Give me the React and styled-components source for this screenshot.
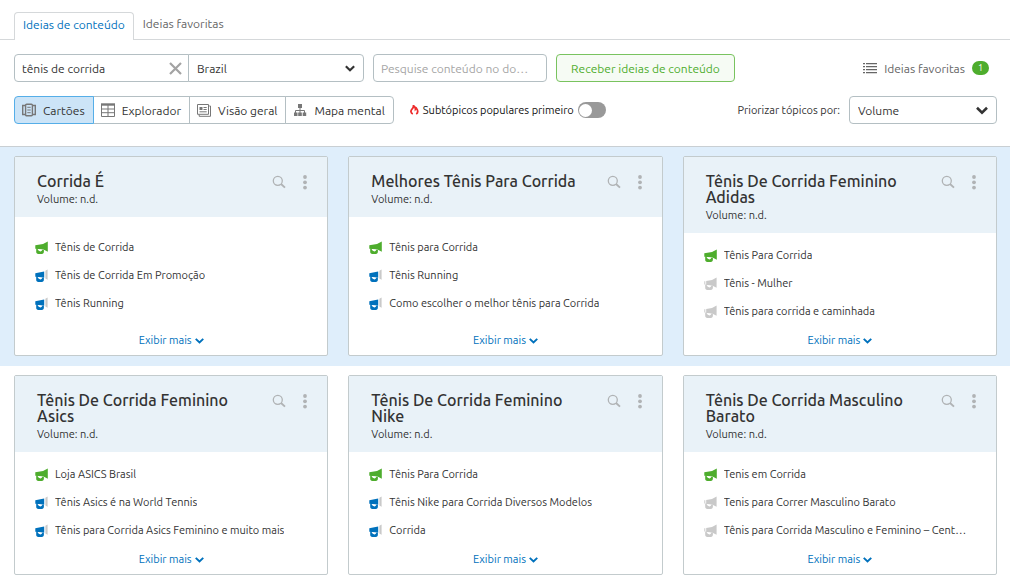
import React, { useState } from 'react';
import styled, { createGlobalStyle, css } from 'styled-components';

const GlobalStyle = createGlobalStyle`
  * {
    box-sizing: border-box;
  }

  body {
    margin: 0;
    background: #fff;
    color: #333;
    font-family: Ubuntu, Lato, sans-serif;
    font-size: 12px;
  }

  button, input, select {
    font: inherit;
    color: inherit;
  }
`;

const colors = {
  blue: '#0071bc',
  green: '#4ead2d',
  grey: '#c9c9c9',
  border: '#b4bfc3',
};

const TabsStyles = styled.nav`
  display: flex;
  align-items: flex-end;
  height: 40px;
  padding-left: 14px;
  border-bottom: 1px solid #d5d8da;
`;

const TabLink = styled.a`
  padding: 0 8px;
  height: 27px;
  line-height: 22px;
  color: #666;
  text-decoration: none;
  border: 1px solid transparent;
  border-bottom: 0;

  ${(props) => props.$active && css`
    height: 28px;
    margin-bottom: -1px;
    line-height: 23px;
    color: ${colors.blue};
    background: #fff;
    border-color: #d5d8da;
    border-radius: 4px 4px 0 0;
  `}
`;

const Toolbar = styled.header`
  display: flex;
  flex-direction: column;
  gap: 14px;
  padding: 14px 13px 22px 14px;
`;

const ToolbarRow = styled.div`
  display: flex;
  align-items: center;
  height: 28px;
`;

const Field = styled.div`
  display: flex;
  align-items: center;
  width: ${(props) => props.$width};
  height: 28px;
  background: #fff;
  border: 1px solid ${colors.border};
  border-radius: ${(props) => props.$radius || '4px'};
  margin-left: ${(props) => props.$gap || 0};
`;

const TextInput = styled.input`
  flex: 1;
  min-width: 0;
  height: 100%;
  padding: 0 7px;
  border: 0;
  background: none;
  outline: none;
  text-overflow: ellipsis;

  &::placeholder {
    color: #a5a5a5;
    opacity: 1;
  }
`;

const ClearButton = styled.button`
  display: flex;
  padding: 0 6px;
  border: 0;
  background: none;
  color: #a3a3a3;
`;

const SelectField = styled(Field)`
  display: grid;
  align-items: center;

  > * {
    grid-area: 1 / 1;
  }

  svg {
    justify-self: end;
    margin-right: 8px;
    pointer-events: none;
  }
`;

const Select = styled.select`
  appearance: none;
  width: 100%;
  height: 26px;
  padding: 0 8px;
  border: 0;
  background: none;
`;

const IdeasButton = styled.button`
  width: 179px;
  height: 28px;
  margin-left: 9px;
  padding: 0;
  color: ${colors.green};
  background: #f6fbf4;
  border: 1px solid #79c35f;
  border-radius: 4px;
`;

const FavoritesLink = styled.a`
  display: flex;
  align-items: center;
  gap: 7px;
  margin: 0 8px 0 auto;
  color: #666;
  text-decoration: none;
`;

const Badge = styled.span`
  width: 17px;
  height: 14px;
  border-radius: 7px;
  background: ${colors.green};
  color: #fff;
  font-size: 9px;
  line-height: 14px;
  text-align: center;
`;

const Segments = styled.div`
  display: flex;
`;

const Segment = styled.button`
  display: flex;
  align-items: center;
  gap: 7px;
  height: 28px;
  padding: 0 8px 0 7px;
  margin-left: -1px;
  background: #fff;
  border: 1px solid ${colors.border};

  &:first-child {
    margin-left: 0;
    border-radius: 4px 0 0 4px;
  }

  &:last-child {
    border-radius: 0 4px 4px 0;
  }

  ${(props) => props.$active && css`
    z-index: 1;
    background: #cce4f7;
    border-color: #55aee8;
  `}
`;

const SwitchLabel = styled.label`
  display: flex;
  align-items: center;
  gap: 4px;
  margin-left: 16px;
  color: #111;
  font-size: 11px;
`;

const Switch = styled.input`
  appearance: none;
  display: flex;
  align-items: center;
  width: 28px;
  height: 16px;
  margin: 0;
  padding: 0 1px;
  border-radius: 8px;
  background: #999;

  &::before {
    content: '';
    width: 13px;
    height: 13px;
    border-radius: 50%;
    background: #fff;
  }

  &:checked {
    justify-content: flex-end;
    background: ${colors.green};
  }
`;

const SortLabel = styled.label`
  margin: 0 9px 0 auto;
  font-size: 11px;
`;

const CardRow = styled.section`
  display: grid;
  grid-template-columns: repeat(3, minmax(0, 1fr));
  gap: 20px;
  padding: 9px 13px 10px 14px;

  ${(props) => props.$highlighted && css`
    background: #dfeefb;
    border-top: 1px solid #c9cfd3;
  `}
`;

const CardStyles = styled.article`
  display: flex;
  flex-direction: column;
  min-height: 200px;
  background: #fff;
  border: 1px solid #c3cbcd;
  border-radius: 2px;
`;

const CardHead = styled.div`
  display: flex;
  justify-content: space-between;
  padding: 16px 18px 10px 22px;
  background: #e9f2f8;

  h2 {
    margin: 0 0 2px;
    font-size: 16px;
    font-weight: 500;
    line-height: 16px;
  }

  p {
    margin: 0;
    font-size: 11px;
    line-height: 16px;
  }
`;

const CardTitle = styled.div`
  flex: 1;
  max-width: 210px;
`;

const CardActions = styled.div`
  display: flex;
  align-items: flex-start;
  gap: 15px;
`;

const IconButton = styled.button`
  display: flex;
  padding: 2px 0;
  border: 0;
  background: none;
  color: #b0b3b5;
`;

const IdeaList = styled.ul`
  display: flex;
  flex: 1;
  flex-direction: column;
  justify-content: center;
  margin: 0;
  padding: 0 18px 0 20px;
  list-style: none;
`;

const Idea = styled.li`
  display: flex;
  align-items: center;
  gap: 7px;
  font-size: 11px;
  line-height: 28px;

  svg {
    flex: none;
  }

  span {
    overflow: hidden;
    text-overflow: ellipsis;
    white-space: nowrap;
  }
`;

const MoreButton = styled.button`
  display: flex;
  align-items: center;
  align-self: center;
  gap: 3px;
  height: 22px;
  padding: 0 0 7px;
  border: 0;
  background: none;
  color: ${colors.blue};
  font-size: 11px;
  line-height: 15px;
`;

const Chevron = ({ width = 11 }) => (
  <svg width={width} height={width} viewBox="0 0 12 12" fill="none" stroke="currentColor" strokeWidth="2.6">
    <path d="M1 3.8 6 8.6l5-4.8" />
  </svg>
);

const CloseIcon = () => (
  <svg width="13" height="13" viewBox="0 0 13 13" fill="none" stroke="currentColor" strokeWidth="2.2">
    <path d="M1 1l11 11M12 1 1 12" />
  </svg>
);

const ListIcon = () => (
  <svg width="14" height="14" viewBox="0 0 14 14" fill="#666">
    <path d="M0 2h2v1.3H0zM3 2h11v1.3H3zM0 5h2v1.3H0zM3 5h11v1.3H3zM0 8h2v1.3H0zM3 8h11v1.3H3zM0 11h2v1.3H0zM3 11h11v1.3H3z" />
  </svg>
);

const CardsIcon = () => (
  <svg width="14" height="14" viewBox="0 0 14 14" fill="none" stroke="#777">
    <path d="M3 2.5H.7v9H3M11 2.5h2.3v9H11" strokeWidth="1.4" />
    <rect x="3.6" y="1.2" width="6.8" height="11.6" rx="1" strokeWidth="1.4" />
    <path d="M5.3 4.3h3.4M5.3 7h3.4M5.3 9.7h3.4" />
  </svg>
);

const TableIcon = () => (
  <svg width="14" height="14" viewBox="0 0 14 14" fill="none" stroke="#777">
    <path d="M0 1.5h14" strokeWidth="2.4" />
    <path d="M.5 2v11.5h13V2M7 2v11.5M0 6h14M0 9.7h14" />
  </svg>
);

const OverviewIcon = () => (
  <svg width="14" height="14" viewBox="0 0 14 14" fill="none" stroke="#777">
    <path d="M.5 1.5h11v9.8H.5zM12.2 3h1.3v10.3H2.2v-1.6" />
    <path d="M2.5 4h3v3h-3z" fill="#777" stroke="none" />
    <path d="M6.5 4.5h3.2M6.5 6.5h3.2M2.5 8.8h7.2" />
  </svg>
);

const MapIcon = () => (
  <svg width="14" height="14" viewBox="0 0 14 14" fill="#777">
    <path d="M5 1h4v4H5zM1 9.5h3.5V13H1zM5.2 9.5h3.6V13H5.2zM9.7 9.5h3.5V13H9.7z" />
    <path d="M7 4v6M2.5 10V7.5h9V10" fill="none" stroke="#777" />
  </svg>
);

const FlameIcon = () => (
  <svg width="9" height="10" viewBox="0 0 9 10" fill="none" stroke="#ee2b2b" strokeWidth="1.8">
    <path d="M2.8 9C.6 7.9.4 5.7 2 4.1 3.2 3 3.6 2.2 3.5.7c1.5.9 2 2 2 3.5l.9-1c1.7 2.1 1.9 4.6-.2 5.8" />
  </svg>
);

const SearchIcon = () => (
  <svg width="14" height="14" viewBox="0 0 14 14" fill="none" stroke="currentColor">
    <circle cx="5.8" cy="5.8" r="4.5" strokeWidth="1.3" />
    <path d="M9 9l4 3.6" strokeWidth="1.9" />
  </svg>
);

const DotsIcon = () => (
  <svg width="8" height="15" viewBox="0 0 8 15" fill="currentColor">
    <circle cx="4" cy="2" r="1.9" />
    <circle cx="4" cy="7.3" r="1.9" />
    <circle cx="4" cy="12.6" r="1.9" />
  </svg>
);

// green: whole horn lit, blue: body lit, grey: nothing lit
const Megaphone = ({ tone }) => {
  const body = colors[tone];

  return (
    <svg width="13" height="13" viewBox="0 0 13 13">
      {tone === 'green' && <path d="M.3 4.2 8 3 12.8.4v10.4L8.5 8.6.3 7.8z" fill={body} />}
      {tone === 'blue' && (
        <>
          <path d="M.3 4.2 9.2 2.6v6.2L.3 7.8z" fill={body} />
          <path d="M10.4 1.8 12.6.6v10.2l-2.2-1.3z" fill={colors.grey} />
        </>
      )}
      {tone === 'grey' && <path d="M.3 4.2h1v3.2h-1zM2.2 4 8 2.9 12.6.5v10.3L8.5 8.7l-6.3-.8z" fill={body} />}
      <path
        d="M1.2 7.5h1.6v1.4c.7-.3 1 1.5 2.500 1.500 1.300 0 1.500-1.100 2.200-1.600h1.400v1.700c0 1.500-.6 2.400-2.200 2.400H3.400c-1.500 0-2.200-.8-2.200-2.200z"
        fill={body}
      />
      <path d="M2.800 8.300 7 8.800c-.6.7-1 1.200-1.900 1.200-1 0-1.700-.7-2.300-1.700z" fill="#fff" />
    </svg>
  );
};

const views = [
  { label: 'Cartões', Icon: CardsIcon },
  { label: 'Explorador', Icon: TableIcon },
  { label: 'Visão geral', Icon: OverviewIcon },
  { label: 'Mapa mental', Icon: MapIcon },
];

const rows = [
  [
    {
      title: 'Corrida É',
      tones: ['green', 'blue', 'blue'],
      ideas: ['Tênis de Corrida', 'Tênis de Corrida Em Promoção', 'Tênis Running'],
    },
    {
      title: 'Melhores Tênis Para Corrida',
      tones: ['green', 'blue', 'blue'],
      ideas: ['Tênis para Corrida', 'Tênis Running', 'Como escolher o melhor tênis para Corrida'],
    },
    {
      title: 'Tênis De Corrida Feminino Adidas',
      tones: ['green', 'grey', 'grey'],
      ideas: ['Tênis Para Corrida', 'Tênis - Mulher', 'Tênis para corrida e caminhada'],
    },
  ],
  [
    {
      title: 'Tênis De Corrida Feminino Asics',
      tones: ['green', 'blue', 'blue'],
      ideas: ['Loja ASICS Brasil', 'Tênis Asics é na World Tennis', 'Tênis para Corrida Asics Feminino e muito mais'],
    },
    {
      title: 'Tênis De Corrida Feminino Nike',
      tones: ['green', 'blue', 'blue'],
      ideas: ['Tênis Para Corrida', 'Tênis Nike para Corrida Diversos Modelos', 'Corrida'],
    },
    {
      title: 'Tênis De Corrida Masculino Barato',
      tones: ['green', 'grey', 'grey'],
      ideas: [
        'Tenis em Corrida',
        'Tenis para Correr Masculino Barato',
        'Tênis para Corrida Masculino e Feminino – Cent…',
      ],
    },
  ],
];

const Card = ({ card }) => (
  <CardStyles>
    <CardHead>
      <CardTitle>
        <h2>{card.title}</h2>
        <p>Volume: n.d.</p>
      </CardTitle>
      <CardActions>
        <IconButton aria-label="Pesquisar"><SearchIcon /></IconButton>
        <IconButton aria-label="Opções"><DotsIcon /></IconButton>
      </CardActions>
    </CardHead>
    <IdeaList>
      {card.ideas.map((idea, i) => (
        <Idea key={idea}>
          <Megaphone tone={card.tones[i]} />
          <span>{idea}</span>
        </Idea>
      ))}
    </IdeaList>
    <MoreButton>
      Exibir mais
      <Chevron width={9} />
    </MoreButton>
  </CardStyles>
);

const App = () => {
  const [topic, setTopic] = useState('tênis de corrida');
  const [view, setView] = useState('Cartões');

  return (
    <>
      <GlobalStyle />
      <TabsStyles>
        <TabLink href="#ideias" $active>Ideias de conteúdo</TabLink>
        <TabLink href="#favoritas">Ideias favoritas</TabLink>
      </TabsStyles>

      <Toolbar>
        <ToolbarRow>
          <Field $width="175px" $radius="4px 0 0 4px">
            <TextInput aria-label="Tópico" value={topic} onChange={(e) => setTopic(e.target.value)} />
            <ClearButton aria-label="Limpar" onClick={() => setTopic('')}><CloseIcon /></ClearButton>
          </Field>
          <SelectField $width="176px" $radius="0 4px 4px 0" $gap="-1px">
            <Select aria-label="País" defaultValue="Brazil">
              <option>Brazil</option>
            </Select>
            <Chevron width={10} />
          </SelectField>
          <Field $width="174px" $gap="9px">
            <TextInput aria-label="Domínio" placeholder="Pesquise conteúdo no do…" />
          </Field>
          <IdeasButton>Receber ideias de conteúdo</IdeasButton>
          <FavoritesLink href="#favoritas">
            <ListIcon />
            Ideias favoritas
            <Badge>1</Badge>
          </FavoritesLink>
        </ToolbarRow>

        <ToolbarRow>
          <Segments>
            {views.map(({ label, Icon }) => (
              <Segment key={label} $active={label === view} onClick={() => setView(label)}>
                <Icon />
                {label}
              </Segment>
            ))}
          </Segments>
          <SwitchLabel>
            <FlameIcon />
            <span>Subtópicos populares primeiro</span>
            <Switch type="checkbox" role="switch" />
          </SwitchLabel>
          <SortLabel htmlFor="sort">Priorizar tópicos por:</SortLabel>
          <SelectField $width="148px">
            <Select id="sort" defaultValue="Volume">
              <option>Volume</option>
            </Select>
            <Chevron width={12} />
          </SelectField>
        </ToolbarRow>
      </Toolbar>

      <main>
        {rows.map((cards, i) => (
          <CardRow key={cards[0].title} $highlighted={i === 0}>
            {cards.map((card) => (
              <Card key={card.title} card={card} />
            ))}
          </CardRow>
        ))}
      </main>
    </>
  );
};

export default App;
